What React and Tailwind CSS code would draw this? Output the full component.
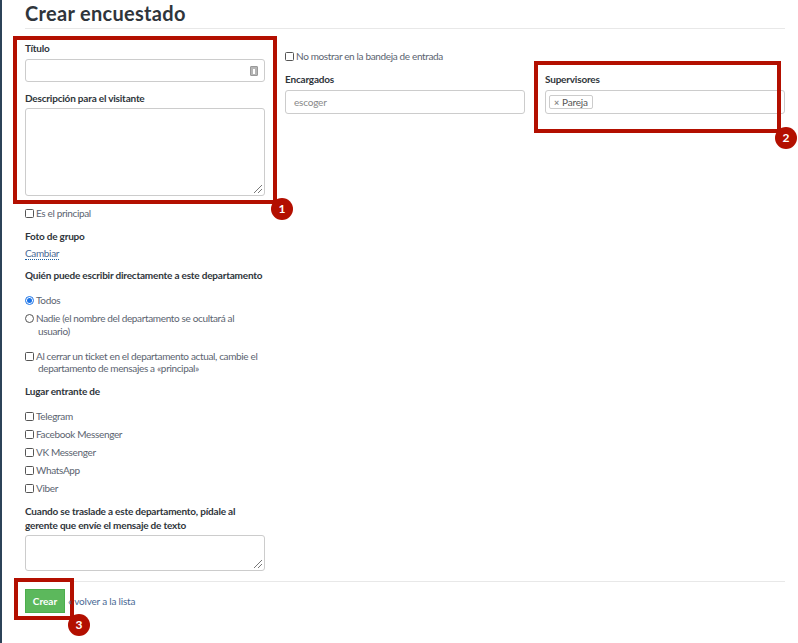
import React from "react";

const Cb = ({ className = "" }) => (
  <span className={"inline-block w-[9px] h-[9px] border border-[#555] rounded-[1.5px] bg-white shrink-0 " + className} />
);

const Label = ({ children, className = "" }) => (
  <div className={"text-[10px] leading-[13px] font-bold text-[#2f353b] tracking-[-0.2px] whitespace-nowrap " + className}>{children}</div>
);

const Check = ({ children, className = "" }) => (
  <div className={"flex items-center gap-[2px] h-[13px] text-[10px] leading-[13px] text-[#5b6470] tracking-[-0.35px] whitespace-nowrap " + className}>
    <Cb />
    <span>{children}</span>
  </div>
);

const Resize = () => (
  <svg className="absolute right-[1px] bottom-[1px]" width="10" height="10" viewBox="0 0 10 10">
    <path d="M1 9 L9 1 M5 9 L9 5" stroke="#555" strokeWidth="0.8" fill="none" />
  </svg>
);

const Box = ({ h, children }) => (
  <div className={"relative w-[240px] border border-[#ccc] rounded-[3px] bg-white " + h}>{children}</div>
);

const Badge = ({ n, className }) => (
  <div className={"absolute w-[22px] h-[22px] rounded-full bg-[#b30f00] text-white text-[12px] font-bold flex items-center justify-center " + className}>{n}</div>
);

export default function App() {
  return (
    <div className="relative w-[798px] h-[643px] bg-white overflow-hidden flex font-['Lato','Open_Sans',sans-serif]">
      <div className="w-[2px] bg-[#2c4358] shrink-0" />
      <div className="flex-1 pl-[23px] pr-[13px]">
        <h1 className="text-[20px] leading-[26px] font-bold text-[#2f353b] border-b border-[#e8e8e8] h-[29px] tracking-[0.3px]">Crear encuestado</h1>
        <div className="flex gap-[20px]">
          <div className="w-[240px] pt-[13px]">
            <Label>Título</Label>
            <div className="mt-[4px]">
              <Box h="h-[23px]">
                <span className="absolute right-[6px] top-[6px] w-[8px] h-[10px] bg-[#b5b5b5] border border-[#999] rounded-[1px] flex items-center justify-center">
                  <span className="w-[2px] h-[5px] bg-white" />
                </span>
              </Box>
            </div>
            <Label className="mt-[10px]">Descripción para el visitante</Label>
            <div className="mt-[3px]">
              <Box h="h-[88px]"><Resize /></Box>
            </div>
            <Check className="mt-[11px]">Es el principal</Check>
            <Label className="mt-[10px]">Foto de grupo</Label>
            <div className="mt-[4px] text-[10px] leading-[12px] text-[#4a6a94] tracking-[-0.35px] border-b border-dotted border-[#1f5f9f] w-fit">Cambiar</div>
            <Label className="mt-[9px]">Quién puede escribir directamente a este departamento</Label>
            <div className="flex items-center gap-[2px] h-[13px] mt-[12px] text-[10px] leading-[13px] text-[#5b6470] tracking-[-0.35px]">
              <span className="w-[9px] h-[9px] rounded-full border border-[#1a73e8] shrink-0 flex items-center justify-center">
                <span className="w-[5px] h-[5px] rounded-full bg-[#1a73e8]" />
              </span>
              <span>Todos</span>
            </div>
            <div className="flex gap-[2px] mt-[5px] text-[10px] leading-[13px] text-[#5b6470] tracking-[-0.35px] whitespace-nowrap">
              <span className="w-[9px] h-[9px] rounded-full border border-[#555] shrink-0 mt-[2px]" />
              <span>Nadie (el nombre del departamento se ocultará al<br /><span className="ml-[2px]">usuario)</span></span>
            </div>
            <div className="flex gap-[2px] mt-[12px] text-[10px] leading-[12px] text-[#5b6470] tracking-[-0.35px] whitespace-nowrap">
              <Cb className="mt-[2px]" />
              <span>Al cerrar un ticket en el departamento actual, cambie el<br /><span className="ml-[2px]">departamento de mensajes a «principal»</span></span>
            </div>
            <Label className="mt-[11px]">Lugar entrante de</Label>
            <Check className="mt-[12px]">Telegram</Check>
            <Check className="mt-[5px]">Facebook Messenger</Check>
            <Check className="mt-[5px]">VK Messenger</Check>
            <Check className="mt-[5px]">WhatsApp</Check>
            <Check className="mt-[5px]">Viber</Check>
            <Label className="mt-[9px] leading-[14px]">Cuando se traslade a este departamento, pídale al<br />gerente que envíe el mensaje de texto</Label>
            <div className="mt-[3px]">
              <Box h="h-[36px]"><Resize /></Box>
            </div>
          </div>
          <div className="w-[240px] pt-[21px]">
            <Check>No mostrar en la bandeja de entrada</Check>
            <Label className="mt-[10px]">Encargados</Label>
            <div className="mt-[4px]">
              <Box h="h-[24px]">
                <div className="pl-[8px] text-[10px] leading-[22px] text-[#888] tracking-[-0.2px]">escoger</div>
              </Box>
            </div>
          </div>
          <div className="w-[240px] pt-[44px]">
            <Label>Supervisores</Label>
            <div className="mt-[4px]">
              <Box h="h-[24px]">
                <div className="absolute left-[3px] top-[4px] h-[14px] px-[4px] border border-[#ccc] rounded-[2px] flex items-center gap-[3px] text-[10px] text-[#555] tracking-[-0.2px]">
                  <span className="text-[9px] text-[#888] leading-none font-bold">×</span>
                  <span>Pareja</span>
                </div>
              </Box>
            </div>
          </div>
        </div>
        <div className="mt-[10px] border-t border-[#e8e8e8] pt-[7px] flex items-center gap-[3px]">
          <div className="w-[40px] h-[24px] bg-[#5cb85c] border border-[#4cae4c] text-white text-[10px] font-bold flex items-center justify-center">Crear</div>
          <span className="relative z-10 text-[10px] text-[#4a6a94] tracking-[-0.2px]">« volver a la lista</span>
        </div>
      </div>

      <div className="absolute left-[13px] top-[36px] w-[264px] h-[168px] border-[4px] border-[#b30f00]" />
      <Badge n="1" className="left-[271px] top-[198px]" />
      <div className="absolute left-[534px] top-[61px] w-[247px] h-[72px] border-[4px] border-[#b30f00]" />
      <Badge n="2" className="left-[775px] top-[127px]" />
      <div className="absolute left-[14px] top-[578px] w-[60px] h-[42px] border-[4px] border-[#b30f00]" />
      <Badge n="3" className="left-[68px] top-[614px]" />
    </div>
  );
}
